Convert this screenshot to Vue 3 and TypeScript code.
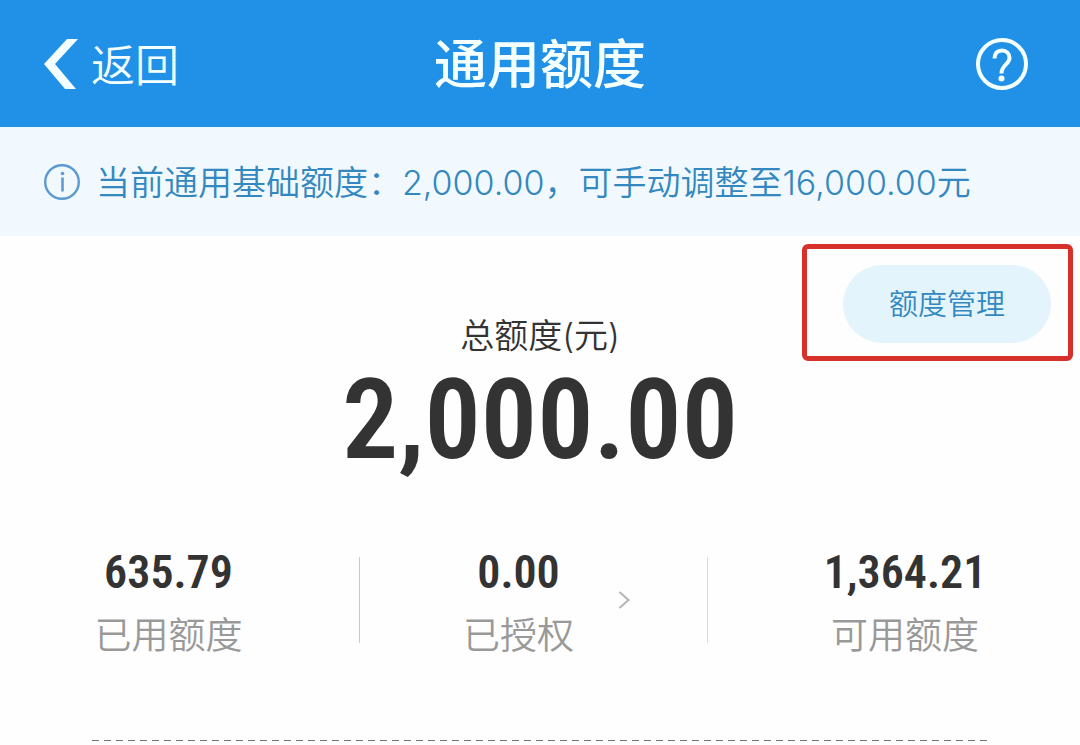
<script setup lang="ts">
interface Stat {
  value: string
  label: string
}

const used: Stat = { value: '635.79', label: '已用额度' }
const authorized: Stat = { value: '0.00', label: '已授权' }
const available: Stat = { value: '1,364.21', label: '可用额度' }
</script>

<template>
  <div class="page">
    <header class="bar">
      <button class="back" type="button">
        <svg class="back-icon" viewBox="0 0 36 52" aria-hidden="true">
          <path d="M24 1H35L12 26L33 51H22L1 26Z" fill="currentColor" />
        </svg>
        <span>返回</span>
      </button>
      <h1 class="title">通用额度</h1>
      <button class="help" type="button" aria-label="帮助">
        <svg class="help-icon" viewBox="0 0 52 52" fill="none" stroke="currentColor" aria-hidden="true">
          <circle cx="26" cy="26" r="24" stroke-width="4" />
          <path d="M18.500 20.500C18.500 15.200 21.500 12.500 26 12.500S33.500 15.500 33.500 20C33.500 26.500 25.500 26.500 25.500 35.500" stroke-width="4" />
          <circle cx="25.500" cy="40.500" r="3" fill="currentColor" stroke="none" />
        </svg>
      </button>
    </header>

    <p class="notice">
      <svg class="info-icon" viewBox="0 0 36 36" fill="none" stroke="currentColor" aria-hidden="true">
        <circle cx="18" cy="18" r="16.800" stroke-width="2.400" />
        <path d="M18.500 13.500V27.500" stroke-width="2.600" />
        <circle cx="18.500" cy="9.500" r="1.800" fill="currentColor" stroke="none" />
      </svg>
      <span>当前通用基础额度：2,000.00，可手动调整至16,000.00元</span>
    </p>

    <main>
      <section class="total">
        <div class="highlight">
          <button class="manage" type="button">额度管理</button>
        </div>
        <h2 class="total-label">总额度(元)</h2>
        <div class="total-value">2,000.00</div>
      </section>

      <section class="stats">
        <div class="stat stat-used">
          <div class="stat-text">
            <span class="value">{{ used.value }}</span>
            <span class="label">{{ used.label }}</span>
          </div>
        </div>
        <button class="stat stat-authorized" type="button">
          <span class="stat-text">
            <span class="value">{{ authorized.value }}</span>
            <span class="label">{{ authorized.label }}</span>
          </span>
          <svg class="chevron" viewBox="0 0 12 18" fill="none" stroke="currentColor" aria-hidden="true">
            <path d="M1.500 1L10.500 9L1.500 17" stroke-width="2" />
          </svg>
        </button>
        <div class="stat stat-available">
          <div class="stat-text">
            <span class="value">{{ available.value }}</span>
            <span class="label">{{ available.label }}</span>
          </div>
        </div>
      </section>
      <div class="dashes"></div>
    </main>
  </div>
</template>

<style>
body {
  margin: 0;
  background: #fefefe;
}
</style>

<style scoped>
.page {
  font-family: Inter, "Noto Sans CJK SC", sans-serif;
  font-weight: 350;
  color: #333;
}

button {
  margin: 0;
  padding: 0;
  border: 0;
  background: none;
  color: inherit;
  font: inherit;
  cursor: pointer;
}

svg {
  display: block;
  flex: none;
}

.bar {
  display: grid;
  grid-template-columns: 1fr auto 1fr;
  align-items: center;
  height: 127px;
  padding: 0 43px;
  box-sizing: border-box;
  background: #2190e7;
  color: #f4ffff;
}

.back {
  justify-self: start;
  display: flex;
  align-items: center;
  gap: 12px;
  font-size: 44px;
  line-height: 64px;
}

.back span {
  padding-top: 4px;
}

.back-icon {
  width: 36px;
  height: 52px;
}

.title {
  margin: 0;
  padding-top: 2px;
  font-size: 53px;
  font-weight: 500;
  line-height: 76px;
}

.help {
  justify-self: end;
  padding-right: 9px;
}

.help-icon {
  width: 52px;
  height: 52px;
}

.notice {
  display: flex;
  align-items: center;
  gap: 16px;
  margin: 0;
  padding: 2px 43px 0 44px;
  height: 109px;
  box-sizing: border-box;
  background: #f2f9fe;
  color: #3388c0;
  font-size: 34px;
  line-height: 48px;
  white-space: nowrap;
}

.info-icon {
  width: 36px;
  height: 36px;
  margin-bottom: 2px;
  color: #5b9bd2;
}

.total {
  position: relative;
  padding-top: 76px;
  text-align: center;
}

.highlight {
  position: absolute;
  top: 8px;
  right: 7px;
  padding: 16px 17px 13px 36px;
  border: 5px solid #d5312a;
  border-radius: 6px;
}

.manage {
  display: block;
  padding: 2px 46px 0;
  border-radius: 39px;
  background: #e3f4fd;
  color: #3388c0;
  font-size: 29px;
  line-height: 76px;
}

.total-label {
  margin: 0;
  font-size: 34px;
  font-weight: inherit;
  line-height: 48px;
}

.total-value {
  font-family: "Roboto Condensed", Roboto, sans-serif;
  font-size: 112px;
  font-weight: 600;
  line-height: 120px;
}

.stats {
  display: grid;
  grid-template-columns: 360fr 348fr 372fr;
  margin-top: 77px;
}

.stat {
  display: flex;
  align-items: center;
  justify-content: center;
  height: 86px;
}

.stat-used {
  padding-right: 22px;
  border-right: 1px solid #c9c9c9;
}

.stat-authorized {
  gap: 44px;
  padding-left: 26px;
  border-right: 1px solid #dcdcdc;
}

.stat-available {
  padding-left: 22px;
}

.stat-text {
  display: flex;
  flex-direction: column;
  align-items: center;
  padding-top: 8px;
}

.value {
  font-family: "Roboto Condensed", Roboto, sans-serif;
  font-size: 46px;
  font-weight: 600;
  line-height: 64px;
}

.label {
  color: #999;
  font-size: 37px;
  line-height: 64px;
}

.chevron {
  width: 12px;
  height: 18px;
  color: #b5b5b5;
}

.dashes {
  height: 1px;
  margin: 97px 92px 0;
  background: repeating-linear-gradient(to right, #777 0 7px, transparent 7px 12px);
}
</style>
